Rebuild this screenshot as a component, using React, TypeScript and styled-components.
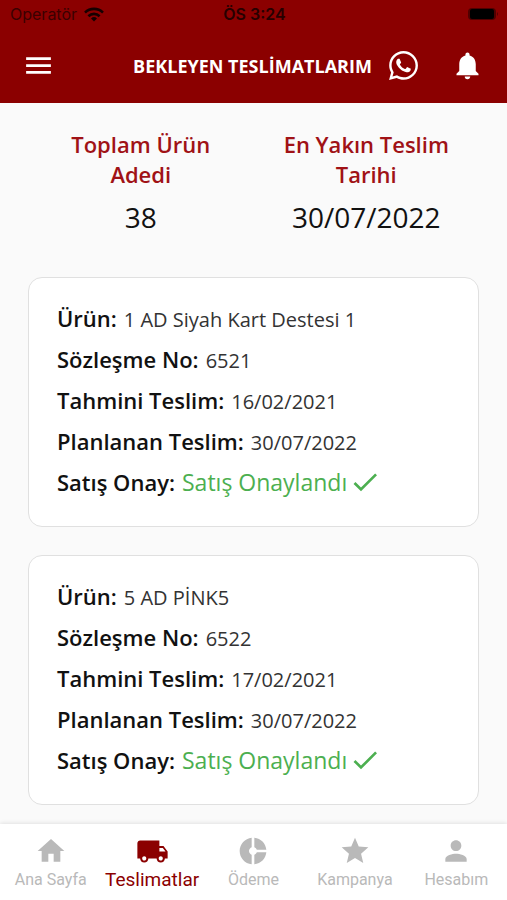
import React from "react";
import styled, { createGlobalStyle } from "styled-components";
import {
  MdCheck,
  MdDonutSmall,
  MdHome,
  MdLocalShipping,
  MdMenu,
  MdNotifications,
  MdPerson,
  MdStar,
} from "react-icons/md";
import { FaWhatsapp } from "react-icons/fa";

const GlobalStyle = createGlobalStyle`
  *, *::before, *::after { box-sizing: border-box; }
  body {
    margin: 0;
    background: #fafafa;
    color: #111;
    font-family: "Open Sans", "Noto Sans", sans-serif;
  }
`;

const Page = styled.div`
  display: flex;
  flex-direction: column;
  min-height: 100vh;
`;

const Header = styled.header`
  background: #8b0000;
  color: #fff;
`;

const StatusBar = styled.div`
  display: grid;
  grid-template-columns: 1fr auto 1fr;
  align-items: center;
  height: 28px;
  padding: 0 8px 0 10px;
  color: #260000;
  font-family: Inter, sans-serif;
  font-size: 16px;
`;

const Carrier = styled.span`
  display: flex;
  align-items: center;
  gap: 7px;
  color: #3a0000;

  svg {
    color: #160000;
  }
`;

const Clock = styled.span`
  font-weight: 600;
`;

const Battery = styled.svg`
  justify-self: end;
`;

const AppBar = styled.div`
  display: grid;
  grid-template-columns: 1fr auto 1fr;
  align-items: center;
  height: 75px;
  padding: 0 20px 0 18px;
`;

const Title = styled.h1`
  margin: 0;
  font-size: 18px;
  font-weight: 700;
  line-height: 24px;
  white-space: nowrap;
`;

const Actions = styled.div`
  display: flex;
  justify-content: flex-end;
  gap: 24px;
`;

const IconButton = styled.button`
  display: flex;
  align-items: center;
  justify-content: center;
  width: 40px;
  height: 40px;
  padding: 0;
  border: 0;
  background: none;
  color: inherit;
  cursor: pointer;
`;

const MenuButton = styled(IconButton)`
  justify-self: start;
`;

const Main = styled.main`
  flex: 1;
  padding: 26px 28px 18px;
`;

const Summary = styled.dl`
  display: grid;
  grid-template-columns: 1fr 1fr;
  margin: 0 0 40px;
  text-align: center;
`;

const SummaryItem = styled.div`
  padding: 0 24px;
`;

const SummaryLabel = styled.dt`
  color: #a01216;
  font-size: 22px;
  font-weight: 600;
  line-height: 30px;
`;

const SummaryValue = styled.dd`
  margin: 8px 0 0;
  font-size: 28px;
  line-height: 40px;
`;

const CardList = styled.ul`
  display: flex;
  flex-direction: column;
  gap: 28px;
  margin: 0;
  padding: 0;
  list-style: none;
`;

const Card = styled.li`
  padding: 20px 28px 23px;
  border: 1px solid #e0e0e0;
  border-radius: 14px;
  background: #fff;
`;

const Fields = styled.dl`
  display: grid;
  grid-auto-rows: minmax(41px, auto);
  margin: 0;
`;

const Field = styled.div`
  display: flex;
  align-items: baseline;
  gap: 7px;
`;

const FieldName = styled.dt`
  font-size: 22px;
  font-weight: 600;
  line-height: 40px;
`;

const FieldValue = styled.dd<{ $approved?: boolean }>`
  display: flex;
  align-items: center;
  gap: 2px;
  margin: 0;
  color: ${(p) => (p.$approved ? "#4caf50" : "#333")};
  font-size: ${(p) => (p.$approved ? 23 : 20)}px;
  line-height: 32px;
`;

const TabBar = styled.nav`
  position: sticky;
  bottom: 0;
  display: grid;
  grid-template-columns: repeat(5, 1fr);
  height: 76px;
  background: #fff;
  box-shadow: 0 -1px 4px rgba(0, 0, 0, 0.1);
`;

const Tab = styled.a<{ $active?: boolean }>`
  display: grid;
  grid-template-rows: 34px 24px;
  place-items: center;
  align-content: start;
  padding-top: 10px;
  color: ${(p) => (p.$active ? "#8b0000" : "#b9b9b9")};
  font-family: Roboto, sans-serif;
  font-size: ${(p) => (p.$active ? 19 : 16)}px;
  line-height: 24px;
  text-decoration: none;
  white-space: nowrap;
`;

const deliveries = [
  { product: "1 AD Siyah Kart Destesi 1", contract: "6521", estimated: "16/02/2021", planned: "30/07/2022" },
  { product: "5 AD PİNK5", contract: "6522", estimated: "17/02/2021", planned: "30/07/2022" },
];

const tabs = [
  { label: "Ana Sayfa", href: "#ana-sayfa", Icon: MdHome },
  { label: "Teslimatlar", href: "#teslimatlar", Icon: MdLocalShipping, active: true },
  { label: "Ödeme", href: "#odeme", Icon: MdDonutSmall },
  { label: "Kampanya", href: "#kampanya", Icon: MdStar },
  { label: "Hesabım", href: "#hesabim", Icon: MdPerson },
];

export default function App() {
  return (
    <Page lang="tr">
      <GlobalStyle />
      <Header>
        <StatusBar>
          <Carrier>
            Operatör
            <svg width="20" height="15" viewBox="0 0 20 15" fill="none" stroke="currentColor" strokeWidth="2.6" aria-hidden="true">
              <path d="M1 5.6a12.8 12.8 0 0 1 18 0" />
              <path d="M4.4 9.2a8 8 0 0 1 11.2 0" />
              <path d="M10 14.5 7 11.4a4.3 4.3 0 0 1 6 0z" fill="currentColor" stroke="none" />
            </svg>
          </Carrier>
          <Clock>ÖS 3:24</Clock>
          <Battery width="32" height="14" viewBox="0 0 32 14" aria-hidden="true">
            <rect x="1" y="1" width="28" height="12" rx="4" fill="#500000" />
            <rect x="3" y="2" width="24" height="10" rx="2" fill="#000" />
            <path d="M30 5q2 2 0 4z" fill="#500000" />
          </Battery>
        </StatusBar>
        <AppBar>
          <MenuButton type="button" aria-label="Menü">
            <MdMenu size={33} />
          </MenuButton>
          <Title>BEKLEYEN TESLİMATLARIM</Title>
          <Actions>
            <IconButton type="button" aria-label="WhatsApp">
              <FaWhatsapp size={33} />
            </IconButton>
            <IconButton type="button" aria-label="Bildirimler">
              <MdNotifications size={33} />
            </IconButton>
          </Actions>
        </AppBar>
      </Header>
      <Main>
        <Summary>
          <SummaryItem>
            <SummaryLabel>Toplam Ürün Adedi</SummaryLabel>
            <SummaryValue>38</SummaryValue>
          </SummaryItem>
          <SummaryItem>
            <SummaryLabel>En Yakın Teslim Tarihi</SummaryLabel>
            <SummaryValue>30/07/2022</SummaryValue>
          </SummaryItem>
        </Summary>
        <CardList>
          {deliveries.map((d) => (
            <Card key={d.contract}>
              <Fields>
                <Field>
                  <FieldName>Ürün:</FieldName>
                  <FieldValue>{d.product}</FieldValue>
                </Field>
                <Field>
                  <FieldName>Sözleşme No:</FieldName>
                  <FieldValue>{d.contract}</FieldValue>
                </Field>
                <Field>
                  <FieldName>Tahmini Teslim:</FieldName>
                  <FieldValue>{d.estimated}</FieldValue>
                </Field>
                <Field>
                  <FieldName>Planlanan Teslim:</FieldName>
                  <FieldValue>{d.planned}</FieldValue>
                </Field>
                <Field>
                  <FieldName>Satış Onay:</FieldName>
                  <FieldValue $approved>
                    Satış Onaylandı
                    <MdCheck size={32} />
                  </FieldValue>
                </Field>
              </Fields>
            </Card>
          ))}
        </CardList>
      </Main>
      <TabBar>
        {tabs.map(({ label, href, Icon, active }) => (
          <Tab key={label} href={href} $active={active} aria-current={active ? "page" : undefined}>
            <Icon size={active ? 33 : 32} />
            {label}
          </Tab>
        ))}
      </TabBar>
    </Page>
  );
}
